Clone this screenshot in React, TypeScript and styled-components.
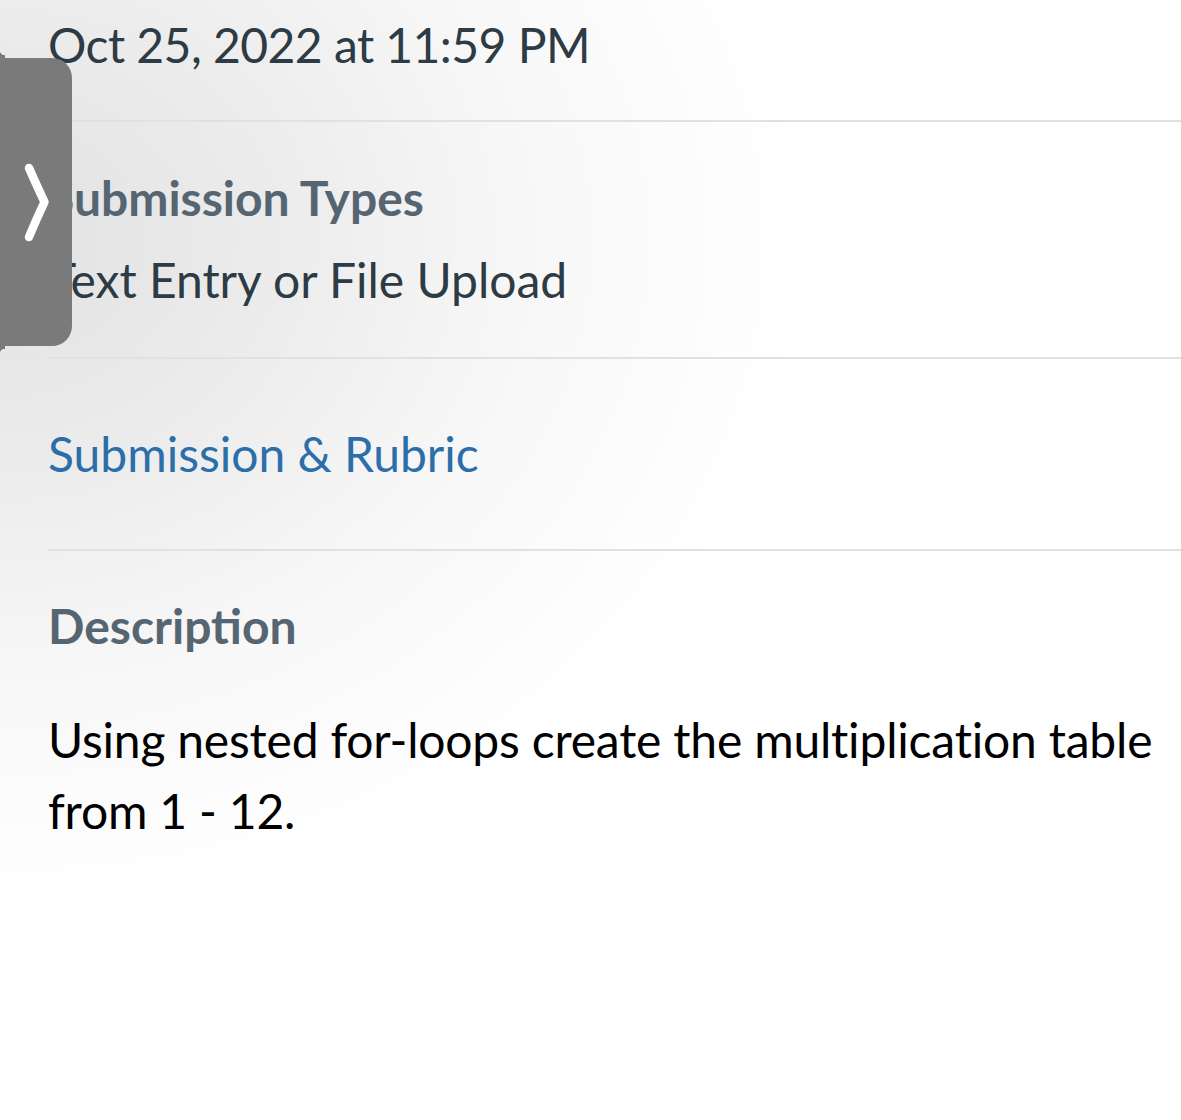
import React from "react";
import styled, { createGlobalStyle } from "styled-components";

const GlobalStyle = createGlobalStyle`
  html, body {
    margin: 0;
    padding: 0;
    background: #ffffff;
  }
  body {
    font-family: Lato, "Noto Sans", sans-serif;
  }
`;

const Screen = styled.div`
  position: relative;
  width: 1181px;
  height: 1120px;
  overflow: hidden;
  background: radial-gradient(
    ellipse 800px 660px at 0 240px,
    #e2e2e2 0%,
    #ececec 35%,
    #f7f7f7 65%,
    #ffffff 100%
  );
`;

const Content = styled.div`
  display: flex;
  flex-direction: column;
  margin-left: 48px;
`;

const Section = styled.section<{ $top: number; $bottom: number; $gap?: number }>`
  display: flex;
  flex-direction: column;
  gap: ${(p) => p.$gap ?? 0}px;
  padding: ${(p) => p.$top}px 0 ${(p) => p.$bottom}px 0;
  border-bottom: 2px solid #e1e1e1;

  &:last-child {
    border-bottom: none;
  }
`;

const Value = styled.div<{ $tight?: boolean }>`
  font-size: 48px;
  line-height: 60px;
  color: #2d3b45;
  white-space: nowrap;
  letter-spacing: ${(p) => (p.$tight ? "-0.55px" : "0")};
`;

const Heading = styled.div`
  font-size: 48px;
  line-height: 60px;
  font-weight: 700;
  color: #556572;
  white-space: nowrap;
`;

const Link = styled.a`
  font-size: 48px;
  line-height: 60px;
  color: #2b6ea9;
  text-decoration: none;
`;

const Body = styled.p`
  margin: 0;
  font-size: 48px;
  line-height: 71px;
  letter-spacing: -0.2px;
  color: #000000;
`;

const DrawerTab = styled.button`
  position: absolute;
  left: 0;
  top: 58px;
  width: 72px;
  height: 288px;
  padding: 0;
  border: none;
  background: #7a7a7a;
  border-radius: 0 20px 20px 0;
  cursor: pointer;

  &::before,
  &::after {
    content: "";
    position: absolute;
    left: 0;
    width: 5px;
    height: 8px;
  }
  &::before {
    top: -8px;
    background: radial-gradient(circle at 100% 0, transparent 5px, #7a7a7a 5.5px);
  }
  &::after {
    bottom: -8px;
    background: radial-gradient(circle at 100% 100%, transparent 5px, #7a7a7a 5.5px);
  }

  svg {
    position: absolute;
    left: 0;
    top: 0;
  }
`;

const Chevron = () => (
  <svg width="72" height="288" viewBox="0 0 72 288">
    <path
      d="M29 110 Q36 126 44.5 144 Q36 162 29 179"
      fill="none"
      stroke="#ffffff"
      strokeWidth="8.5"
      strokeLinecap="round"
      strokeLinejoin="round"
    />
  </svg>
);

export default function App() {
  return (
    <>
      <GlobalStyle />
      <Screen>
        <Content>
          <Section $top={15} $bottom={45}>
            <Value $tight>Oct 25, 2022 at 11:59 PM</Value>
          </Section>
          <Section $top={46} $bottom={47} $gap={22}>
            <Heading>Submission Types</Heading>
            <Value>Text Entry or File Upload</Value>
          </Section>
          <Section $top={65} $bottom={65}>
            <Link href="#">Submission &amp; Rubric</Link>
          </Section>
          <Section $top={45} $bottom={0} $gap={48}>
            <Heading>Description</Heading>
            <Body>Using nested for-loops create the multiplication table from 1 - 12.</Body>
          </Section>
        </Content>
        <DrawerTab aria-label="Open drawer">
          <Chevron />
        </DrawerTab>
      </Screen>
    </>
  );
}
